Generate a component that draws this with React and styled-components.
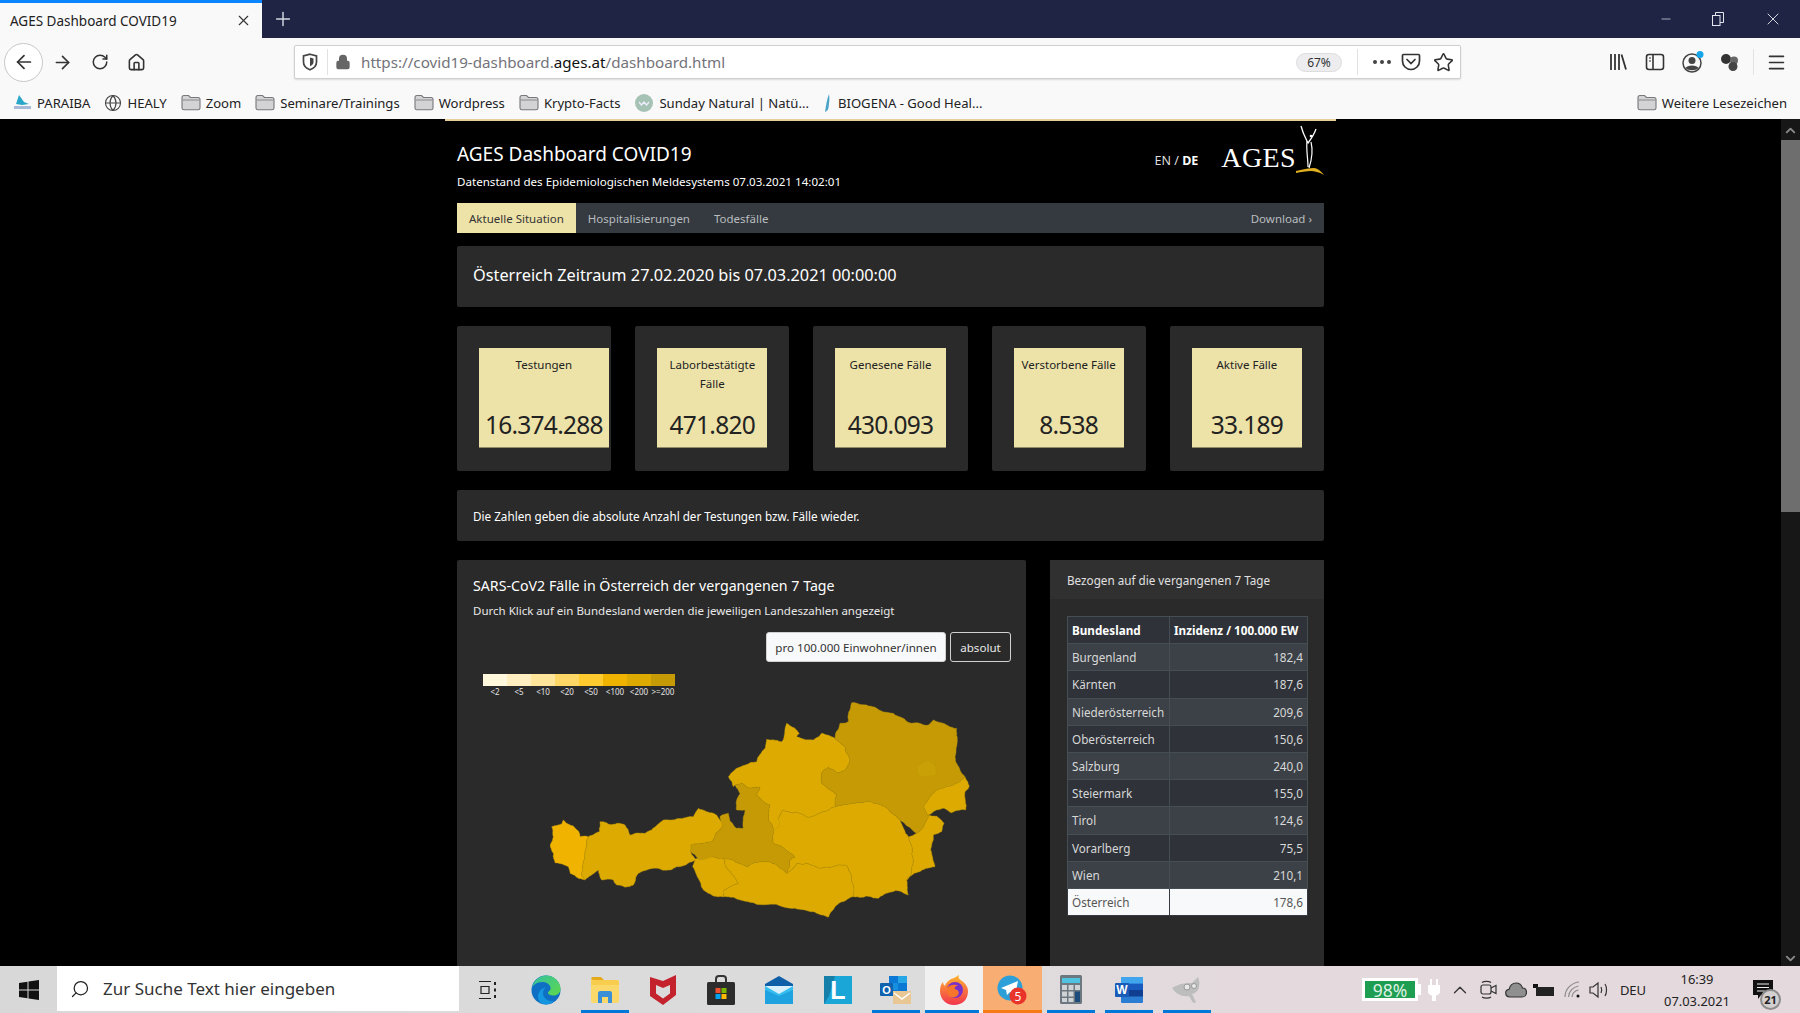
import React from "react";
import styled, { createGlobalStyle } from "styled-components";
import {
  ArrowLeft,
  ArrowRight,
  RotateCw,
  Home,
  Lock,
  Star,
  Globe,
  X,
  Plus,
  Minus,
  ChevronUp,
  ChevronDown,
  Search,
  Menu,
} from "lucide-react";

const FONT = `"Noto Sans", "Open Sans", sans-serif`;

const GlobalStyle = createGlobalStyle`
  html, body { margin: 0; padding: 0; height: 100%; overflow: hidden; background: #000; }
  #root { height: 100%; }
  * { box-sizing: border-box; }
`;

const Screen = styled.div`
  display: flex;
  flex-direction: column;
  width: 1800px;
  height: 1013px;
  font-family: ${FONT};
  overflow: hidden;
`;

/* browser chrome */
const TabBar = styled.div`
  display: flex;
  align-items: center;
  height: 38px;
  background: #1f2444;
  color: #fff;
  flex: none;
`;

const Tab = styled.div`
  display: flex;
  align-items: center;
  justify-content: space-between;
  width: 262px;
  height: 38px;
  padding: 0 10px 0 10px;
  background: #f9f9fa;
  border-top: 3px solid #0a84ff;
  color: #222;
  font-size: 13.5px;
`;

const NewTab = styled.div`
  display: flex;
  margin-left: 10px;
  color: #d4d6e0;
`;

const WindowButtons = styled.div`
  display: flex;
  align-items: center;
  gap: 39px;
  margin-left: auto;
  padding-right: 17px;
  color: #e4e5ee;
`;

const Toolbar = styled.div`
  display: flex;
  align-items: center;
  height: 48px;
  padding-left: 4px;
  background: #f9f9fa;
  color: #333;
  flex: none;
`;

const BackCircle = styled.div`
  display: flex;
  align-items: center;
  justify-content: center;
  width: 39px;
  height: 39px;
  border-radius: 50%;
  border: 1px solid #c8c8c8;
  background: #fff;
`;

const ToolButton = styled.div`
  display: flex;
  align-items: center;
  justify-content: center;
  width: ${(p) => p.$w || 37}px;
`;

const UrlBar = styled.div`
  display: flex;
  align-items: center;
  width: 1167px;
  height: 34px;
  margin-left: 139px;
  padding-left: 7px;
  background: #fff;
  border: 1px solid #cfcfd2;
  border-radius: 2px;
  box-shadow: 0 1px 2px rgba(0, 0, 0, 0.12);
  flex: none;
`;

const UrlDivider = styled.div`
  width: 1px;
  height: 26px;
  margin: ${(p) => p.$margin};
  background: #e2e2e4;
`;

const UrlText = styled.div`
  margin-left: 10px;
  font-size: 15.2px;
  color: #73737a;
  white-space: nowrap;
  b {
    color: #111;
    font-weight: 400;
  }
`;

const Zoom = styled.div`
  margin-left: auto;
  width: 46px;
  height: 19px;
  border-radius: 10px;
  background: #ededf0;
  border: 1px solid #ddd;
  color: #333;
  font-size: 12px;
  line-height: 17px;
  text-align: center;
`;

const ToolRight = styled.div`
  display: flex;
  align-items: center;
  margin-left: 138px;
`;

const Bookmarks = styled.div`
  display: flex;
  align-items: center;
  gap: 14px;
  height: 33px;
  padding: 0 13px;
  background: #f9f9fa;
  font-size: 13.1px;
  color: #222;
  flex: none;
`;

const Bookmark = styled.div`
  display: flex;
  align-items: center;
  gap: 5px;
  white-space: nowrap;
  margin-left: ${(p) => (p.$end ? "auto" : 0)};
`;

/* page */
const Viewport = styled.div`
  display: flex;
  flex: 1;
  min-height: 0;
  background: #000;
`;

const Page = styled.div`
  flex: 1;
  overflow: hidden;
`;

const Container = styled.div`
  width: 891px;
  margin: 0 auto;
  padding: 0 12px;
  border-top: 2px solid #e6cf9a;
  color: #fff;
`;

const Scrollbar = styled.div`
  display: flex;
  flex-direction: column;
  align-items: center;
  justify-content: space-between;
  width: 19px;
  padding: 4px 0 0;
  background: #171717;
  color: #8a8a8a;
  flex: none;
`;

const Thumb = styled.div`
  width: 19px;
  height: 372px;
  margin-top: 2px;
  margin-bottom: auto;
  background: #6e6e6e;
`;

const Masthead = styled.header`
  display: flex;
  justify-content: space-between;
  height: 82px;
`;

const Title = styled.h1`
  margin: 20px 0 0;
  font-size: 19px;
  line-height: 26px;
  font-weight: 400;
`;

const Subtitle = styled.div`
  margin-top: 7px;
  font-size: 11.6px;
  line-height: 16px;
`;

const Brand = styled.div`
  display: flex;
  align-items: flex-start;
`;

const Lang = styled.div`
  margin: 32px 23px 0 0;
  font-size: 12.5px;
  line-height: 16px;
  color: #ddd;
  b {
    color: #fff;
    font-weight: 700;
  }
`;

const LogoText = styled.div`
  margin-top: 20px;
  font-family: "Liberation Serif", serif;
  font-size: 28px;
  line-height: 34px;
  letter-spacing: 0.4px;
  color: #fff;
`;

const LogoFigure = styled.svg`
  margin-top: 4px;
`;

const NavBar = styled.nav`
  display: flex;
  align-items: center;
  height: 30px;
  background: #343a40;
  font-size: 11.5px;
  color: #b9bcbf;
`;

const NavItem = styled.div`
  display: flex;
  align-items: center;
  height: 30px;
  padding: 0 12px;
  margin-left: ${(p) => (p.$end ? "auto" : 0)};
  background: ${(p) => (p.$active ? "#ede3a9" : "transparent")};
  color: ${(p) => (p.$active ? "#333" : "inherit")};
`;

const Banner = styled.div`
  display: flex;
  align-items: center;
  height: ${(p) => p.$h}px;
  margin-top: ${(p) => p.$top}px;
  padding: 0 16px ${(p) => p.$pad || 0}px;
  background: #2a2a2a;
  border-radius: 2px;
  font-size: ${(p) => p.$size}px;
`;

const Cards = styled.div`
  display: grid;
  grid-template-columns: repeat(5, minmax(0, 1fr));
  gap: 24px;
  margin-top: 19px;
`;

const Card = styled.div`
  min-width: 0;
  height: 145px;
  padding: 22px;
  background: #2a2a2a;
  border-radius: 2px;
`;

const Tile = styled.div`
  display: flex;
  flex-direction: column;
  justify-content: space-between;
  width: min-content;
  min-width: 100%;
  height: 100px;
  padding: 7px 0 6px;
  background: #ede3a9;
  border-bottom: 1px solid #8f8a68;
  color: #222;
  text-align: center;
`;

const TileLabel = styled.div`
  padding: 0 3px;
  font-size: 11.5px;
  line-height: 19px;
`;

const TileValue = styled.div`
  padding: 0 6px;
  font-size: 24.5px;
  line-height: 32px;
  letter-spacing: -0.75px;
  white-space: nowrap;
`;

const Panels = styled.div`
  display: flex;
  gap: 24px;
  margin-top: 19px;
`;

const MapPanel = styled.section`
  width: 569px;
  height: 500px;
  padding: 14px 15px 0 16px;
  background: #2a2a2a;
  border-radius: 2px;
`;

const PanelTitle = styled.h2`
  margin: 0;
  font-size: 14.2px;
  line-height: 24px;
  font-weight: 400;
`;

const PanelHint = styled.div`
  margin-top: 1px;
  font-size: 11.5px;
  line-height: 24px;
  color: #e8e8e8;
`;

const Toggle = styled.div`
  display: flex;
  justify-content: flex-end;
  gap: 4px;
  margin-top: 9px;
`;

const ToggleButton = styled.div`
  display: flex;
  align-items: center;
  justify-content: center;
  height: 30px;
  width: ${(p) => p.$w}px;
  background: ${(p) => (p.$on ? "#f8f9fa" : "transparent")};
  border: 1px solid #d0d0d0;
  border-radius: 3px;
  color: ${(p) => (p.$on ? "#333" : "#e8e8e8")};
  font-size: 11.6px;
`;

const Legend = styled.div`
  width: 200px;
  margin: 12px 0 0 10px;
`;

const LegendScale = styled.div`
  display: flex;
  height: 12px;
`;

const LegendSwatch = styled.div`
  width: 24px;
  background: ${(p) => p.$color};
`;

const LegendLabels = styled.div`
  display: flex;
  height: 14px;
  font-size: 8px;
  line-height: 12px;
  color: #e4e4e4;
`;

const LegendLabel = styled.div`
  width: 24px;
  text-align: center;
  white-space: nowrap;
`;

const MapDrawing = styled.svg`
  display: block;
  width: 420px;
  height: 220px;
  margin-left: 77px;
`;

const TablePanel = styled.section`
  width: 274px;
  height: 500px;
  background: #2a2a2a;
  border-radius: 2px;
`;

const TableHead = styled.div`
  height: 39px;
  padding: 0 17px;
  background: #303030;
  font-size: 11.7px;
  line-height: 41px;
  color: #e0e0e0;
`;

const Table = styled.table`
  width: 240px;
  margin: 17px 0 0 17px;
  border-collapse: collapse;
  table-layout: fixed;
  font-size: 11.7px;
  color: #d8d8d8;
`;

const HeadCell = styled.th`
  height: 27.2px;
  padding: 0 4px;
  background: #2f3339;
  border: 1px solid #454d55;
  color: #fff;
  font-weight: 700;
  font-size: 11.7px;
  text-align: left;
  white-space: nowrap;
  width: ${(p) => p.$w}px;
`;

const Row = styled.tr`
  background: ${(p) => (p.$total ? "#f8f9fa" : p.$odd ? "#3c4147" : "#2f3339")};
  color: ${(p) => (p.$total ? "#555" : "inherit")};
`;

const Cell = styled.td`
  height: 27.2px;
  padding: 0 4px;
  border: 1px solid ${(p) => (p.$total ? "#343a40" : "#454d55")};
  text-align: ${(p) => (p.$num ? "right" : "left")};
`;

/* windows taskbar */
const Taskbar = styled.div`
  display: flex;
  align-items: stretch;
  height: 47px;
  background: linear-gradient(90deg, #d8d8d8 0%, #dcdcdc 50%, #e4d9dd 70%, #e4d9dd 100%);
  color: #222;
  flex: none;
`;

const StartButton = styled.div`
  display: flex;
  align-items: center;
  justify-content: center;
  width: 57px;
`;

const SearchBox = styled.div`
  display: flex;
  align-items: center;
  gap: 13px;
  width: 402px;
  height: 45px;
  padding-left: 13px;
  background: #fff;
  font-size: 17px;
  color: #333;
`;

const SearchGlyph = styled(Search)`
  transform: scaleX(-1);
`;

const TaskSlot = styled.div`
  position: relative;
  display: flex;
  align-items: center;
  justify-content: center;
  width: 58.25px;
  background: ${(p) => (p.$flash ? "#f8ae72" : p.$hover ? "#f0f0f0" : "transparent")};
  &::after {
    content: "";
    position: absolute;
    bottom: 0;
    left: ${(p) => (p.$flash || p.$hover ? 0 : 5)}px;
    right: ${(p) => (p.$flash ? 0 : p.$hover ? 4 : 5)}px;
    height: 3px;
    background: ${(p) => (p.$flash ? "#f77a14" : p.$open ? "#0078d7" : "transparent")};
  }
`;

const Tray = styled.div`
  display: flex;
  align-items: center;
  margin-left: auto;
`;

const BatteryMeter = styled.div`
  position: relative;
  display: flex;
  align-items: center;
  justify-content: center;
  width: 56px;
  height: 23px;
  margin-right: 6px;
  background: #1e9e50;
  border: 3px solid #fff;
  color: #dff0e4;
  font-size: 17.5px;
  &::after {
    content: "";
    position: absolute;
    right: -6px;
    top: 3px;
    width: 3px;
    height: 11px;
    background: #fff;
  }
`;

const TrayIcon = styled.div`
  display: flex;
  align-items: center;
  justify-content: center;
  width: ${(p) => p.$w}px;
`;

const TrayLang = styled.div`
  width: 42px;
  text-align: center;
  font-size: 13px;
`;

const Clock = styled.div`
  width: 86px;
  margin-right: 3px;
  text-align: center;
  font-size: 12.9px;
  line-height: 22px;
`;

const Notify = styled.div`
  position: relative;
  width: 40px;
  margin: 0 17px 0 0;
  display: flex;
  align-items: center;
  justify-content: center;
`;

const NotifyCount = styled.div`
  position: absolute;
  left: 17px;
  top: 9px;
  width: 21px;
  height: 21px;
  border-radius: 50%;
  background: #d4d0d0;
  border: 2px solid #8c8c8c;
  font-size: 11px;
  font-weight: 700;
  line-height: 17px;
  text-align: center;
`;

/* small drawings */
const FolderIcon = () => (
  <svg width="20" height="17" viewBox="0 0 20 17">
    <path
      d="M1 3.5C1 2.4 1.7 1.5 3 1.5h4.5l2 2H17c1.2 0 2 .8 2 2V14c0 1-.8 1.8-2 1.8H3c-1.2 0-2-.8-2-1.8z"
      fill="#d3d3d5"
      stroke="#77777c"
      strokeWidth="1.1"
    />
    <path d="M1.4 6h17.2" stroke="#8a8a8e" strokeWidth="1" />
  </svg>
);

const ShieldIcon = () => (
  <svg width="16" height="18" viewBox="0 0 16 18" fill="none" stroke="#444" strokeWidth="1.7">
    <path d="M8 1.2 14.5 3v6c0 4-3 6.5-6.5 7.8C4.500 15.500 1.500 13 1.500 9V3z" />
    <path d="M8 4.500 11.500 5.500V9c0 2-1.500 3.500-3.500 4.300z" fill="#444" stroke="none" />
  </svg>
);

const PocketIcon = () => (
  <svg width="20" height="18" viewBox="0 0 20 18" fill="none" stroke="#333" strokeWidth="1.7">
    <path d="M2.500 1.500h15c.6 0 1 .4 1 1V8a8.500 8.500 0 0 1-17 0V2.500c0-.6.400-1 1-1z" />
    <path d="m6 6.500 4 4 4-4" strokeLinecap="round" />
  </svg>
);

const LibraryIcon = () => (
  <svg width="20" height="18" viewBox="0 0 20 18" stroke="#333" strokeWidth="1.8">
    <path d="M3 1v16M7 1v16M11 1v16M13.500 1.500 18 16.500" />
  </svg>
);

const SidebarIcon = () => (
  <svg width="20" height="18" viewBox="0 0 20 18" fill="none" stroke="#333" strokeWidth="1.6">
    <rect x="1.500" y="1.500" width="17" height="15" rx="2.500" />
    <path d="M8 1.500v15" />
    <path d="M4 5h2M4 8h2" strokeWidth="1.200" />
  </svg>
);

const AccountIcon = () => (
  <svg width="24" height="24" viewBox="0 0 24 24">
    <circle cx="11" cy="13" r="9" fill="none" stroke="#444" strokeWidth="1.500" />
    <circle cx="11" cy="10.500" r="3.500" fill="#444" />
    <path d="M4.500 18c1.500-3.500 11.500-3.500 13 0-3 3-10 3-13 0z" fill="#444" />
    <circle cx="19" cy="4.500" r="3.500" fill="#15a5e8" />
  </svg>
);

const ExtensionIcon = () => (
  <svg width="20" height="20" viewBox="0 0 20 20">
    <circle cx="6" cy="7" r="5" fill="#333" />
    <circle cx="14" cy="8.500" r="4" fill="#666" />
    <circle cx="13" cy="14.500" r="4.500" fill="#444" />
  </svg>
);

const RestoreIcon = () => (
  <svg width="12" height="14" viewBox="0 0 12 14" fill="none" stroke="#e4e5ee" strokeWidth="1">
    <rect x="0.500" y="3.500" width="7.500" height="10" />
    <path d="M3.500 3.500v-3h8v10H8" />
  </svg>
);

const ParaibaIcon = () => (
  <svg width="19" height="17" viewBox="0 0 19 17">
    <path d="M6 1l5 7 5 2-7 1-6-1z" fill="#2aa6c8" />
    <path d="M1 12h17v3H1z" fill="#a9b9d8" />
  </svg>
);

const SundayIcon = () => (
  <svg width="20" height="20" viewBox="0 0 20 20">
    <circle cx="10" cy="10" r="9" fill="#a6c2b4" />
    <path d="M5 9l2.500 3L10 9l2.500 3L15 9" fill="none" stroke="#eef" strokeWidth="1.200" />
  </svg>
);

const BiogenaIcon = () => (
  <svg width="10" height="20" viewBox="0 0 10 20">
    <path d="M6 1C4 6 3 12 2 19c2-1 3-2 3.500-4C6 10 7 6 6 1z" fill="#4aa4c8" />
  </svg>
);

const AgesFigure = () => (
  <LogoFigure width="28" height="62" viewBox="0 0 28 62" fill="none">
    <path d="M5 1c2 8 5 13 7 17 3-4 6-8 8-14" stroke="#fff" strokeWidth="1.300" />
    <path d="M11 16c-1 8 1 18 1 26M15 17c2 8 1 17-2 26" stroke="#fff" strokeWidth="1.200" />
    <circle cx="15" cy="11" r="1.300" fill="#fff" />
    <path d="M0 46c8-2 14-3 18-3 3 0 7 3 10 7-5-3-10-4-13-4-5 0-10 1-15 2z" fill="#e0b020" />
  </LogoFigure>
);

const WinLogo = () => (
  <svg width="20" height="20" viewBox="0 0 20 20" fill="#111">
    <path d="M0 3 8.500 1.700v7.800H0zM9.500 1.500 20 0v9.500H9.500zM0 10.500h8.500v7.800L0 17zM9.500 10.500H20V20L9.500 18.500z" />
  </svg>
);

const TaskViewIcon = () => (
  <svg width="20" height="20" viewBox="0 0 20 20" fill="none" stroke="#222" strokeWidth="1.200">
    <path d="M1 1.500h12M1 18.500h12M3 6.500h8v7H3z" />
    <path d="M17 2v3M17 15v3M17 8.500v3" strokeWidth="2" />
  </svg>
);

const EdgeIcon = () => (
  <svg width="30" height="30" viewBox="0 0 30 30">
    <defs>
      <linearGradient id="edgeA" x1="0" y1="0" x2="1" y2="1">
        <stop offset="0" stopColor="#35c1a0" />
        <stop offset="1" stopColor="#5ed84a" />
      </linearGradient>
    </defs>
    <circle cx="15" cy="15" r="14.500" fill="#0f6fc2" />
    <path d="M1 13C3 4 10 .5 15 .5c8 0 14.500 6 14.500 13.500 0 4-3 6.500-7 6.500-3 0-5.500-1-5.500-2.500 0-2 3-2 2.500-5.500C19 9 15 7 11 7 6 7 2 10 1 13z" fill="url(#edgeA)" />
    <path d="M12 18c0 5 5 9 11 8-3 2.500-6 3.500-8 3.500-4 0-8-3-8-8 0-5 4-9 8-9-2 1-3 3-3 5.500z" fill="#1597e0" />
  </svg>
);

const ExplorerIcon = () => (
  <svg width="28" height="26" viewBox="0 0 28 26">
    <path d="M0 2c0-1 .7-2 2-2h8l3 3H2z" fill="#e5a91a" />
    <path d="M0 3h26c1 0 2 .8 2 2v19c0 1-1 2-2 2H2c-1 0-2-1-2-2z" fill="#fad869" />
    <path d="M0 8h28V5c0-1-1-2-2-2H0z" fill="#f8cb47" opacity="0.8" />
    <path d="M7 16c0-1 1-2 2-2h10c1 0 2 1 2 2v10h-4v-6h-6v6H7z" fill="#3b8fd6" />
  </svg>
);

const McAfeeIcon = () => (
  <svg width="26" height="30" viewBox="0 0 26 30">
    <path fillRule="evenodd" d="M0 2 13 6 26 0v20L13 30 0 21zM6 10v8.500L13 23.500l7-5V10l-7 3z" fill="#c4232e" />
  </svg>
);

const StoreIcon = () => (
  <svg width="28" height="30" viewBox="0 0 28 30">
    <path d="M9 8V4c0-2 1-3 3-3h4c2 0 3 1 3 3v4" fill="none" stroke="#333" strokeWidth="2" />
    <rect y="7" width="28" height="23" rx="1.500" fill="#2c2c2c" />
    <rect x="8.500" y="13" width="5" height="5" fill="#ef5030" />
    <rect x="14.500" y="13" width="5" height="5" fill="#7db800" />
    <rect x="8.500" y="19" width="5" height="5" fill="#00a4ef" />
    <rect x="14.500" y="19" width="5" height="5" fill="#ffb900" />
  </svg>
);

const MailIcon = () => (
  <svg width="28" height="28" viewBox="0 0 28 28">
    <path d="M0 8 14 0l14 8v4H0z" fill="#0f5fa8" />
    <path d="M0 10h28v18H0z" fill="#35bdf0" />
    <path d="M0 10h28L14 18z" fill="#d8f0fb" />
    <path d="M0 28V14l14 6 14-6v14z" fill="#1fa2e0" />
  </svg>
);

const LaunchIcon = () => (
  <svg width="28" height="28" viewBox="0 0 28 28">
    <rect width="28" height="28" fill="#1ba6d8" />
    <path d="M0 0h11l-6 20 -5 8z" fill="#147fa8" />
    <text x="14" y="23" textAnchor="middle" fontFamily="Liberation Sans" fontSize="25" fontWeight="700" fill="#fff">L</text>
  </svg>
);

const OutlookIcon = () => (
  <svg width="31" height="28" viewBox="0 0 31 28">
    <rect x="9" y="0" width="18" height="20" fill="#0a78d4" />
    <rect x="18" y="0" width="9" height="7" fill="#27a6e5" />
    <rect x="9" y="7" width="9" height="7" fill="#1490df" />
    <rect y="7" width="13" height="13" rx="1" fill="#0f62ae" />
    <text x="6.500" y="17.500" textAnchor="middle" fontFamily="Liberation Sans" fontSize="11" fontWeight="700" fill="#fff">O</text>
    <rect x="13" y="15" width="18" height="13" fill="#e9c795" />
    <path d="M14 17l8 6 8-6" fill="none" stroke="#fff" strokeWidth="1.500" />
  </svg>
);

const FirefoxIcon = () => (
  <svg width="28" height="30" viewBox="0 0 28 30">
    <defs>
      <linearGradient id="ffA" x1="0" y1="0" x2="0" y2="1">
        <stop offset="0" stopColor="#ffb52e" />
        <stop offset="1" stopColor="#f2344f" />
      </linearGradient>
    </defs>
    <path d="M14 30C6 30 0 24 0 16 0 12 1 9 3 7c0 2 1 3 2 4 1-4 5-7 9-8 4-2 4-3 5-3-1 3 0 4 3 6 4 3 6 6 6 10 0 9-6 14-14 14z" fill="url(#ffA)" />
    <circle cx="15" cy="15" r="8" fill="#7b2fc9" />
    <path d="M7 13c3-4 9-4 11-2-3 0-4 2-3 3 3 1 5 3 3 6-2 3-7 3-9 1-2-2-3-5-2-8z" fill="#f7762c" />
  </svg>
);

const TelegramIcon = () => (
  <svg width="31" height="30" viewBox="0 0 31 30">
    <circle cx="13" cy="13" r="12.500" fill="#2d9fd8" />
    <path d="M4 13 21 6l-3 15-5-4-3 3-1-5z" fill="#fff" />
    <circle cx="21" cy="21" r="8.500" fill="#e8342a" />
    <text x="21" y="25.500" textAnchor="middle" fontFamily="Noto Sans" fontSize="12" fill="#fff">5</text>
  </svg>
);

const CalcIcon = () => (
  <svg width="22" height="29" viewBox="0 0 22 29">
    <rect width="22" height="29" rx="1.500" fill="#6d7780" />
    <rect x="2" y="3" width="18" height="5" fill="#4fc3e0" />
    <path d="M2 10h5v5H2zM8.500 10h5v5h-5zM15 10h5v5h-5zM2 16.500h5v5H2zM8.500 16.500h5v5h-5zM2 23h5v4H2zM8.500 23h5v4h-5z" fill="#cfd3d6" />
    <rect x="15" y="16.500" width="5" height="10.500" fill="#1c4c7c" />
  </svg>
);

const WordIcon = () => (
  <svg width="28" height="26" viewBox="0 0 28 26">
    <rect x="6" width="22" height="26" rx="1" fill="#2b7cd3" />
    <rect x="6" y="6.500" width="22" height="6.500" fill="#185abd" />
    <rect x="6" y="13" width="22" height="6.500" fill="#103f91" />
    <rect x="6" y="0" width="22" height="6.500" fill="#41a5ee" />
    <rect y="6" width="14" height="14" rx="1" fill="#1a5bb8" />
    <text x="7" y="17" textAnchor="middle" fontFamily="Liberation Sans" fontSize="12" fontWeight="700" fill="#fff">W</text>
  </svg>
);

const GimpIcon = () => (
  <svg width="30" height="28" viewBox="0 0 30 28">
    <path d="M0 12c3-2 6-3 9-4 3-1 8-1 11-1l6-6c1 3 2 6 1 9 0 4-3 7-7 8l3 6c1 1 1 3-1 3-2-1-3-4-5-7-7 1-13-2-17-8z" fill="#bdbdbd" />
    <circle cx="15" cy="11" r="3" fill="#e8e8e8" stroke="#999" />
    <circle cx="22" cy="10" r="2.500" fill="#e8e8e8" stroke="#999" />
  </svg>
);

const PlugIcon = () => (
  <svg width="12" height="24" viewBox="0 0 12 24" fill="#fff">
    <path d="M2 1h2v6h4V1h2v6h2v7c0 2-2 3-4 3.500V23H4v-5.500C2 17 0 16 0 14V7h2z" />
  </svg>
);

const MeetIcon = () => (
  <svg width="20" height="20" viewBox="0 0 20 20" fill="none" stroke="#333" strokeWidth="1.200">
    <rect x="2" y="5" width="10" height="9" rx="2" />
    <path d="m12 8 5-2.500v8L12 11" />
    <path d="M3 2.500c2-1.500 7-1.500 9 0M3 17c2 1.500 7 1.500 9 0" />
  </svg>
);

const CloudIcon = () => (
  <svg width="22" height="16" viewBox="0 0 22 16">
    <path d="M5 15C2 15 .7 13 .7 11 .7 9 2 7.500 4 7.300 5 3.500 8 1 11 1c3 0 5.500 2 6.500 5 2.500 0 4 2 4 4.500 0 2.500-2 4.500-4.500 4.500z" fill="#8f8f8f" stroke="#333" strokeWidth="1.200" />
  </svg>
);

const BatteryIcon = () => (
  <svg width="22" height="14" viewBox="0 0 22 14">
    <rect x="0" y="1" width="5" height="4" fill="#111" />
    <rect x="3" y="4" width="18" height="9" fill="#222" />
  </svg>
);

const WifiIcon = () => (
  <svg width="18" height="18" viewBox="0 0 18 18" fill="none" stroke="#8c8c8c" strokeWidth="1.200">
    <path d="M1 16C1 8 7 2 15 1M4.500 16c0-5.500 4.500-10 10-11M8 16c0-3.500 3-6.500 6.500-7" />
    <circle cx="14" cy="15" r="1.500" fill="#111" stroke="none" />
  </svg>
);

const SpeakerIcon = () => (
  <svg width="22" height="18" viewBox="0 0 22 18" fill="none" stroke="#333" strokeWidth="1.200">
    <path d="M1 6h3l5-4v14l-5-4H1z" />
    <path d="M12 6c1 2 1 4 0 6M16 3c2 3 2 9 0 12" />
  </svg>
);

const NotifyIcon = () => (
  <svg width="20" height="20" viewBox="0 0 20 20">
    <path d="M0 0h20v15H8l-3 4v-4H0z" fill="#111" />
    <path d="M4 4h12M4 7.500h12M4 11h8" stroke="#eee" strokeWidth="1" />
  </svg>
);

const REGIONS = [
  {
    fill: "#f0b400",
    points:
      "95,440 125,432 130,420 140,430 160,438 180,470 205,470 200,495 190,545 185,585 195,600 175,595 150,580 145,560 105,548 100,520 90,495 100,470",
  },
  {
    fill: "#dcaa00",
    points:
      "205,470 238,455 240,425 265,432 290,430 315,435 330,465 375,460 395,450 430,420 520,410 535,385 560,395 590,405 605,425 607,440 575,485 512,495 512,515 530,540 480,560 450,570 410,565 380,570 355,580 340,615 315,622 290,615 280,600 245,600 235,570 215,585 195,600 185,585 190,545 200,495",
  },
  {
    fill: "#dcaa00",
    points:
      "530,535 580,530 610,535 625,570 655,610 612,630 610,650 575,645 550,630 540,605 518,560",
  },
  {
    fill: "#dcaa00",
    points:
      "610,535 640,540 680,560 720,545 750,545 780,565 800,580 830,550 860,550 900,565 980,555 995,590 1000,650 970,665 945,680 925,712 880,695 810,685 700,668 640,652 610,650 612,630 655,610 625,570",
  },
  {
    fill: "#dcaa00",
    points:
      "760,450 775,415 790,390 840,400 865,412 945,380 1000,370 1050,365 1095,380 1140,420 1165,470 1180,540 1175,580 1160,600 1165,645 1130,632 1100,640 1075,655 1040,648 1000,650 995,590 980,555 900,565 860,550 830,550 800,580 810,540 825,530 785,500 760,490",
  },
  {
    fill: "#dcaa00",
    points:
      "625,290 650,265 710,245 735,205 740,178 785,185 800,130 830,150 838,160 830,170 880,180 905,160 945,175 975,200 990,240 975,270 950,278 925,262 905,280 905,310 950,345 945,380 865,412 840,400 790,390 775,415 780,440 760,450 745,420 750,375 730,365 710,345 720,322 690,325 665,310 645,315 640,320",
  },
  {
    fill: "#c59a05",
    points:
      "512,495 575,485 607,440 600,410 625,400 632,425 650,445 670,445 675,390 650,390 650,360 660,340 645,315 665,310 690,325 720,322 710,345 730,365 750,375 745,420 760,450 760,490 785,500 825,530 810,540 800,580 780,565 750,545 720,545 680,560 640,540 610,535 580,530 540,540 512,515",
  },
  {
    fill: "#c59a05",
    points:
      "945,175 960,130 985,125 995,68 1040,75 1070,85 1120,100 1175,130 1225,135 1240,120 1280,135 1310,145 1312,180 1305,230 1325,280 1335,290 1320,305 1280,320 1240,340 1210,380 1225,405 1215,430 1190,460 1165,440 1140,420 1095,380 1050,365 1000,370 945,380 950,345 905,310 905,280 925,262 950,278 975,270 990,240 975,200",
  },
  {
    fill: "#c9a005",
    points: "1190,262 1205,250 1225,240 1245,255 1252,285 1220,290 1195,285",
  },
  {
    fill: "#dcaa00",
    points:
      "1335,290 1348,318 1335,335 1337,390 1295,398 1270,385 1240,395 1225,405 1250,408 1272,430 1265,455 1240,465 1232,510 1245,560 1220,565 1200,575 1160,600 1175,580 1180,540 1165,470 1190,460 1215,430 1225,405 1210,380 1240,340 1280,320 1320,305",
  },
];

// the state borders are jagged; the offset depends only on the midpoint, so two
// neighbouring states get the same line along a shared edge
const noise = (x, y) => {
  const s = Math.sin(x * 12.9898 + y * 78.233) * 43758.5453;
  return s - Math.floor(s) - 0.5;
};

const splitEdge = (a, b, depth) => {
  if (depth === 0) return [];
  const mx = Math.round((a[0] + b[0]) * 5) / 10;
  const my = Math.round((a[1] + b[1]) * 5) / 10;
  const amp = Math.min(Math.hypot(b[0] - a[0], b[1] - a[1]) * 0.18, 9);
  const mid = [mx + noise(mx, my) * amp, my + noise(my, mx) * amp];
  return [...splitEdge(a, mid, depth - 1), mid, ...splitEdge(mid, b, depth - 1)];
};

const roughen = (points) => {
  const pts = points.split(" ").map((p) => p.split(",").map(Number));
  const out = [];
  pts.forEach((p, i) => {
    out.push(p, ...splitEdge(p, pts[(i + 1) % pts.length], 3));
  });
  return out.map((p) => p.map((v) => v.toFixed(1)).join(",")).join(" ");
};

const LEGEND = [
  ["#fff8dc", "<2"],
  ["#ffefc0", "<5"],
  ["#ffe49a", "<10"],
  ["#ffd766", "<20"],
  ["#ffcb2e", "<50"],
  ["#f0b400", "<100"],
  ["#dcaa00", "<200"],
  ["#c59a05", ">=200"],
];

const TILES = [
  ["Testungen", "16.374.288"],
  ["Laborbestätigte Fälle", "471.820"],
  ["Genesene Fälle", "430.093"],
  ["Verstorbene Fälle", "8.538"],
  ["Aktive Fälle", "33.189"],
];

const ROWS = [
  ["Burgenland", "182,4"],
  ["Kärnten", "187,6"],
  ["Niederösterreich", "209,6"],
  ["Oberösterreich", "150,6"],
  ["Salzburg", "240,0"],
  ["Steiermark", "155,0"],
  ["Tirol", "124,6"],
  ["Vorarlberg", "75,5"],
  ["Wien", "210,1"],
];

const BOOKMARKS = [
  [<ParaibaIcon key="p" />, "PARAIBA"],
  [<Globe key="g" size={18} strokeWidth={1.5} color="#444" />, "HEALY"],
  [<FolderIcon key="z" />, "Zoom"],
  [<FolderIcon key="s" />, "Seminare/Trainings"],
  [<FolderIcon key="w" />, "Wordpress"],
  [<FolderIcon key="k" />, "Krypto-Facts"],
  [<SundayIcon key="n" />, "Sunday Natural | Natü..."],
  [<BiogenaIcon key="b" />, "BIOGENA - Good Heal..."],
];

const TASKS = [
  { icon: <TaskViewIcon /> },
  { icon: <EdgeIcon /> },
  { icon: <ExplorerIcon />, open: true },
  { icon: <McAfeeIcon /> },
  { icon: <StoreIcon /> },
  { icon: <MailIcon /> },
  { icon: <LaunchIcon /> },
  { icon: <OutlookIcon />, open: true },
  { icon: <FirefoxIcon />, open: true, hover: true },
  { icon: <TelegramIcon />, flash: true },
  { icon: <CalcIcon />, open: true },
  { icon: <WordIcon />, open: true },
  { icon: <GimpIcon />, open: true },
];

const App = () => {
  return (
    <Screen>
      <GlobalStyle />
      <TabBar>
        <Tab>
          AGES Dashboard COVID19
          <X size={17} strokeWidth={1.6} color="#333" />
        </Tab>
        <NewTab>
          <Plus size={22} strokeWidth={1.6} />
        </NewTab>
        <WindowButtons>
          <Minus size={14} strokeWidth={1.2} />
          <RestoreIcon />
          <X size={20} strokeWidth={1.1} />
        </WindowButtons>
      </TabBar>

      <Toolbar>
        <BackCircle>
          <ArrowLeft size={22} strokeWidth={1.9} color="#333" />
        </BackCircle>
        <ToolButton $w={38}>
          <ArrowRight size={21} strokeWidth={1.9} />
        </ToolButton>
        <ToolButton>
          <RotateCw size={18} strokeWidth={2} />
        </ToolButton>
        <ToolButton>
          <Home size={19} strokeWidth={2} />
        </ToolButton>
        <UrlBar>
          <ShieldIcon />
          <UrlDivider $margin="0 7px 0 9px" />
          <Lock size={16} fill="#666" color="#666" />
          <UrlText>
            https://covid19-dashboard.<b>ages.at</b>/dashboard.html
          </UrlText>
          <Zoom>67%</Zoom>
          <UrlDivider $margin="0 12px 0 15px" />
          <ToolButton $w={24}>
            <svg width="20" height="6" viewBox="0 0 20 6" fill="#444">
              <circle cx="3" cy="3" r="2" />
              <circle cx="10" cy="3" r="2" />
              <circle cx="17" cy="3" r="2" />
            </svg>
          </ToolButton>
          <ToolButton $w={33}>
            <PocketIcon />
          </ToolButton>
          <ToolButton $w={33}>
            <Star size={21} strokeWidth={1.8} color="#333" />
          </ToolButton>
        </UrlBar>
        <ToolRight>
          <ToolButton $w={37}>
            <LibraryIcon />
          </ToolButton>
          <ToolButton $w={38}>
            <SidebarIcon />
          </ToolButton>
          <ToolButton $w={38}>
            <AccountIcon />
          </ToolButton>
          <ToolButton $w={36}>
            <ExtensionIcon />
          </ToolButton>
          <UrlDivider $margin="0 0 0 5px" />
          <ToolButton $w={44}>
            <Menu size={21} strokeWidth={1.8} color="#333" />
          </ToolButton>
        </ToolRight>
      </Toolbar>

      <Bookmarks>
        {BOOKMARKS.map(([icon, label]) => (
          <Bookmark key={label}>
            {icon}
            {label}
          </Bookmark>
        ))}
        <Bookmark $end>
          <FolderIcon />
          Weitere Lesezeichen
        </Bookmark>
      </Bookmarks>

      <Viewport>
        <Page>
          <Container>
            <Masthead>
              <div>
                <Title>AGES Dashboard COVID19</Title>
                <Subtitle>Datenstand des Epidemiologischen Meldesystems 07.03.2021 14:02:01</Subtitle>
              </div>
              <Brand>
                <Lang>
                  EN / <b>DE</b>
                </Lang>
                <LogoText>AGES</LogoText>
                <AgesFigure />
              </Brand>
            </Masthead>

            <NavBar>
              <NavItem $active>Aktuelle Situation</NavItem>
              <NavItem>Hospitalisierungen</NavItem>
              <NavItem>Todesfälle</NavItem>
              <NavItem $end>Download ›</NavItem>
            </NavBar>

            <Banner $h={61} $top={13} $size={16.3} $pad={4}>
              Österreich Zeitraum 27.02.2020 bis 07.03.2021 00:00:00
            </Banner>

            <Cards>
              {TILES.map(([label, value]) => (
                <Card key={label}>
                  <Tile>
                    <TileLabel>{label}</TileLabel>
                    <TileValue>{value}</TileValue>
                  </Tile>
                </Card>
              ))}
            </Cards>

            <Banner $h={51} $top={19} $size={11.7}>
              Die Zahlen geben die absolute Anzahl der Testungen bzw. Fälle wieder.
            </Banner>

            <Panels>
              <MapPanel>
                <PanelTitle>SARS-CoV2 Fälle in Österreich der vergangenen 7 Tage</PanelTitle>
                <PanelHint>Durch Klick auf ein Bundesland werden die jeweiligen Landeszahlen angezeigt</PanelHint>
                <Toggle>
                  <ToggleButton $on $w={180}>
                    pro 100.000 Einwohner/innen
                  </ToggleButton>
                  <ToggleButton $w={61}>absolut</ToggleButton>
                </Toggle>
                <Legend>
                  <LegendScale>
                    {LEGEND.map(([color, label]) => (
                      <LegendSwatch key={label} $color={color} />
                    ))}
                  </LegendScale>
                  <LegendLabels>
                    {LEGEND.map(([color, label]) => (
                      <LegendLabel key={label}>{label}</LegendLabel>
                    ))}
                  </LegendLabels>
                </Legend>
                <MapDrawing viewBox="90 60 1260 660">
                  {REGIONS.map((region, i) => (
                    <polygon
                      key={i}
                      points={roughen(region.points)}
                      fill={region.fill}
                      stroke="#bb9506"
                      strokeWidth="1.200"
                      strokeLinejoin="round"
                    />
                  ))}
                </MapDrawing>
              </MapPanel>

              <TablePanel>
                <TableHead>Bezogen auf die vergangenen 7 Tage</TableHead>
                <Table>
                  <thead>
                    <tr>
                      <HeadCell $w={102}>Bundesland</HeadCell>
                      <HeadCell $w={138}>Inzidenz / 100.000 EW</HeadCell>
                    </tr>
                  </thead>
                  <tbody>
                    {ROWS.map(([name, value], i) => (
                      <Row key={name} $odd={i % 2 === 0}>
                        <Cell>{name}</Cell>
                        <Cell $num>{value}</Cell>
                      </Row>
                    ))}
                    <Row $total>
                      <Cell $total>Österreich</Cell>
                      <Cell $total $num>
                        178,6
                      </Cell>
                    </Row>
                  </tbody>
                </Table>
              </TablePanel>
            </Panels>
          </Container>
        </Page>
        <Scrollbar>
          <ChevronUp size={15} strokeWidth={3} />
          <Thumb />
          <ChevronDown size={15} strokeWidth={3} />
        </Scrollbar>
      </Viewport>

      <Taskbar>
        <StartButton>
          <WinLogo />
        </StartButton>
        <SearchBox>
          <SearchGlyph size={20} strokeWidth={1.5} color="#222" />
          Zur Suche Text hier eingeben
        </SearchBox>
        {TASKS.map((task, i) => (
          <TaskSlot key={i} $open={task.open} $hover={task.hover} $flash={task.flash}>
            {task.icon}
          </TaskSlot>
        ))}
        <Tray>
          <BatteryMeter>98%</BatteryMeter>
          <TrayIcon $w={20}>
            <PlugIcon />
          </TrayIcon>
          <TrayIcon $w={32}>
            <ChevronUp size={22} strokeWidth={1.4} color="#333" />
          </TrayIcon>
          <TrayIcon $w={26}>
            <MeetIcon />
          </TrayIcon>
          <TrayIcon $w={28}>
            <CloudIcon />
          </TrayIcon>
          <TrayIcon $w={28}>
            <BatteryIcon />
          </TrayIcon>
          <TrayIcon $w={30}>
            <WifiIcon />
          </TrayIcon>
          <TrayIcon $w={24}>
            <SpeakerIcon />
          </TrayIcon>
          <TrayLang>DEU</TrayLang>
          <Clock>
            16:39
            <br />
            07.03.2021
          </Clock>
          <Notify>
            <NotifyIcon />
            <NotifyCount>21</NotifyCount>
          </Notify>
        </Tray>
      </Taskbar>
    </Screen>
  );
};

export default App;
